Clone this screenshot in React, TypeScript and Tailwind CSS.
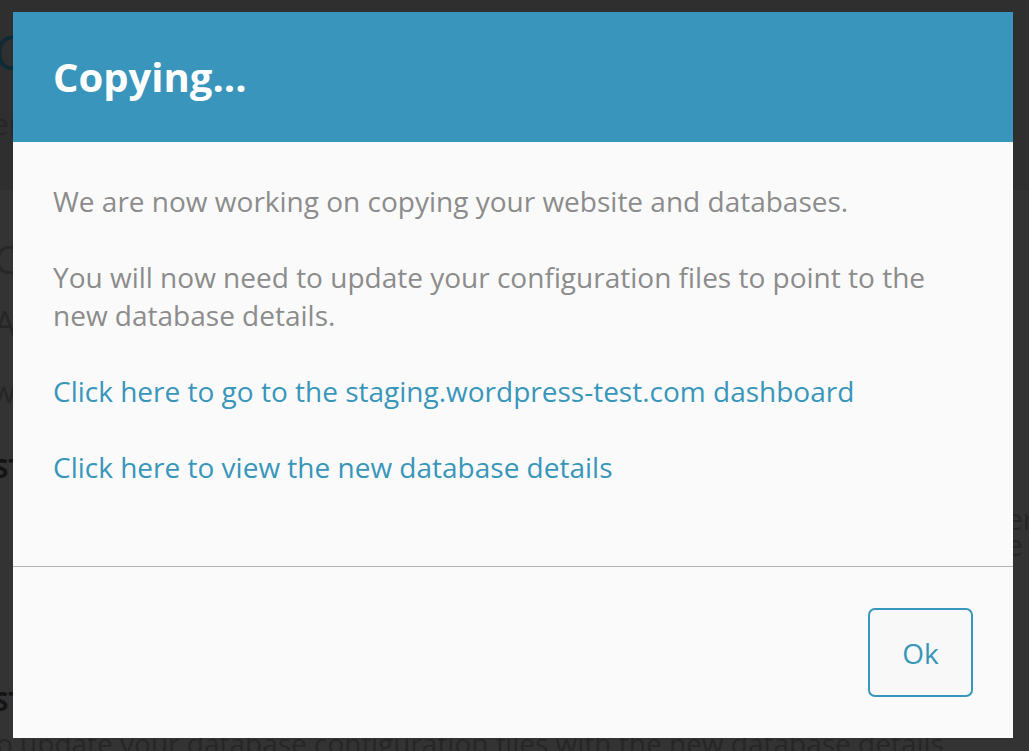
import React from "react";

const font = { fontFamily: '"Open Sans", "Noto Sans", sans-serif' };

function BackdropPage() {
  // the page underneath, dimmed by the overlay
  return (
    <div className="text-[#1d1d1d]" style={font}>
      <div className="h-[190px] bg-[#2f2f2f] pt-[22px]">
        <h1 className="ml-[-6px] text-[48px] leading-[60px] text-[#0f2a36]">Copy</h1>
        <p className="ml-[-8px] mt-[22px] text-[30px] leading-[40px] text-[#262626]">enter</p>
      </div>
      <div className="pt-[44px]">
        <h2 className="ml-[-6px] text-[38px] leading-[50px] text-[#272727]">Copy</h2>
        <p className="ml-[-6px] mt-[14px] text-[34px] leading-[50px] text-[#262626]">A</p>
        <p className="ml-[-8px] mt-[24px] text-[30px] leading-[40px] text-[#262626]">w</p>
        <p className="ml-[-6px] mt-[38px] text-[26px] font-bold leading-[36px] text-[#141414]">ST</p>
        <div className="mt-[20px] flex flex-col items-end text-[30px] leading-[26px] text-[#262626]">
          <span className="mr-[-6px]">er</span>
          <span className="mr-[6px]">e</span>
        </div>
        <p className="ml-[-6px] mt-[128px] text-[26px] font-bold leading-[30px] text-[#141414]">ST</p>
        <p className="ml-[-14px] mt-[10px] whitespace-nowrap text-[28px] leading-[34px] text-[#262626]">
          to update your database configuration files with the new database details
        </p>
      </div>
    </div>
  );
}

export default function App() {
  return (
    <div className="relative h-[751px] w-full overflow-hidden bg-[#333333]">
      <BackdropPage />

      {/* Modal */}
      <div
        className="absolute left-[13px] top-[12px] flex h-[726px] w-[1000px] flex-col bg-[#fafafa]"
        style={font}
      >
        <div className="flex h-[130px] items-center bg-[#3995bb] px-10">
          <h3 className="text-[40px] font-bold text-white">Copying...</h3>
        </div>

        <div className="h-[424px] px-10 pt-10 text-[28px] leading-[38px]">
          <p className="mb-[38px] text-[#8c8c8c]">
            We are now working on copying your website and databases.
          </p>
          <p className="mb-[38px] text-[#8c8c8c]">
            You will now need to update your configuration files to point to the new database
            details.
          </p>
          <p className="mb-[38px]">
            <a className="text-[#3996bb]" href="#">
              Click here to go to the staging.wordpress-test.com dashboard
            </a>
          </p>
          <p>
            <a className="text-[#3996bb]" href="#">
              Click here to view the new database details
            </a>
          </p>
        </div>

        <div className="h-[1px] bg-[#b4b4b4]" />

        <div className="flex flex-1 items-center justify-end px-10">
          <button className="flex h-[89px] w-[105px] items-center justify-center rounded-[7px] border-2 border-[#3996bb] bg-[#f8f8f8] text-[28px] text-[#3996bb]">
            Ok
          </button>
        </div>
      </div>
    </div>
  );
}
